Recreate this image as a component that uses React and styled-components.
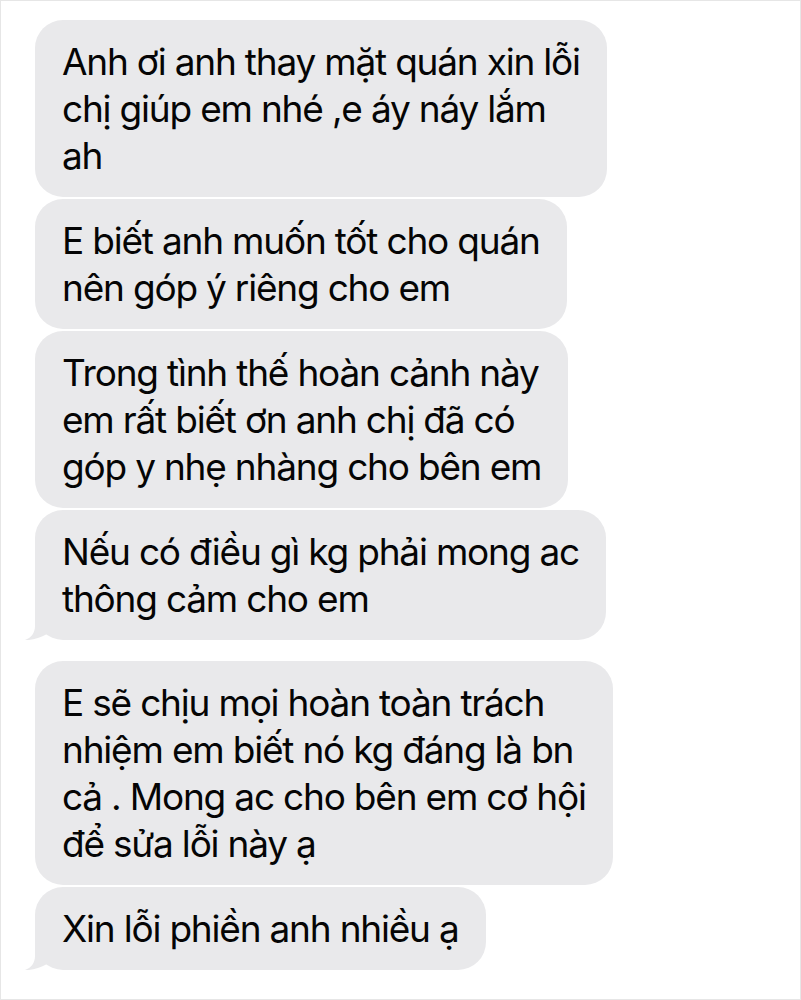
import React from "react";
import styled, { createGlobalStyle } from "styled-components";

const GlobalStyle = createGlobalStyle`
  html, body {
    margin: 0;
    padding: 0;
    background: #fff;
  }
  * {
    box-sizing: border-box;
  }
`;

const Screen = styled.div`
  width: 801px;
  height: 1000px;
  border: 1px solid #e6e6e6;
  background: #fff;
  padding: 19px 0 0 34px;
  display: flex;
  flex-direction: column;
  align-items: flex-start;
  gap: 2px;
  overflow: hidden;
`;

const Bubble = styled.div`
  position: relative;
  background: #e9e9eb;
  color: #050505;
  border-radius: 28px;
  padding: 18px 27px;
  font-family: Inter, "Noto Sans", sans-serif;
  font-size: 37px;
  letter-spacing: -1.2px;
  line-height: 47px;
  white-space: nowrap;
  margin-bottom: ${(p) => (p.$tail ? "19px" : "0")};
`;

const Tail = styled.svg`
  position: absolute;
  left: -10px;
  bottom: 0;
  width: 24px;
  height: 30px;
`;

const messages = [
  { lines: ["Anh ơi anh thay mặt quán xin lỗi", "chị giúp em nhé ,e áy náy lắm", "ah"] },
  { lines: ["E biết anh muốn tốt cho quán", "nên góp ý riêng cho em"] },
  { lines: ["Trong tình thế hoàn cảnh này", "em rất biết ơn anh chị đã có", "góp y nhẹ nhàng cho bên em"] },
  { lines: ["Nếu có điều gì kg phải mong ac", "thông cảm cho em"], tail: true },
  {
    lines: [
      "E sẽ chịu mọi hoàn toàn trách",
      "nhiệm em biết nó kg đáng là bn",
      "cả . Mong ac cho bên em cơ hội",
      "để sửa lỗi này ạ",
    ],
  },
  { lines: ["Xin lỗi phiền anh nhiều ạ"], tail: true },
];

function App() {
  return (
    <>
      <GlobalStyle />
      <Screen>
        {messages.map((m, i) => (
          <Bubble key={i} $tail={m.tail}>
            {m.lines.map((line, j) => (
              <React.Fragment key={j}>
                {j > 0 && <br />}
                {line}
              </React.Fragment>
            ))}
            {m.tail && (
              <Tail viewBox="0 0 24 30">
                <path d="M10 0 L10 16 C10 23 6 28 0 30 C7 30.5 15 28 22 24 L10 0 Z" fill="#e9e9eb" />
              </Tail>
            )}
          </Bubble>
        ))}
      </Screen>
    </>
  );
}

export default App;
